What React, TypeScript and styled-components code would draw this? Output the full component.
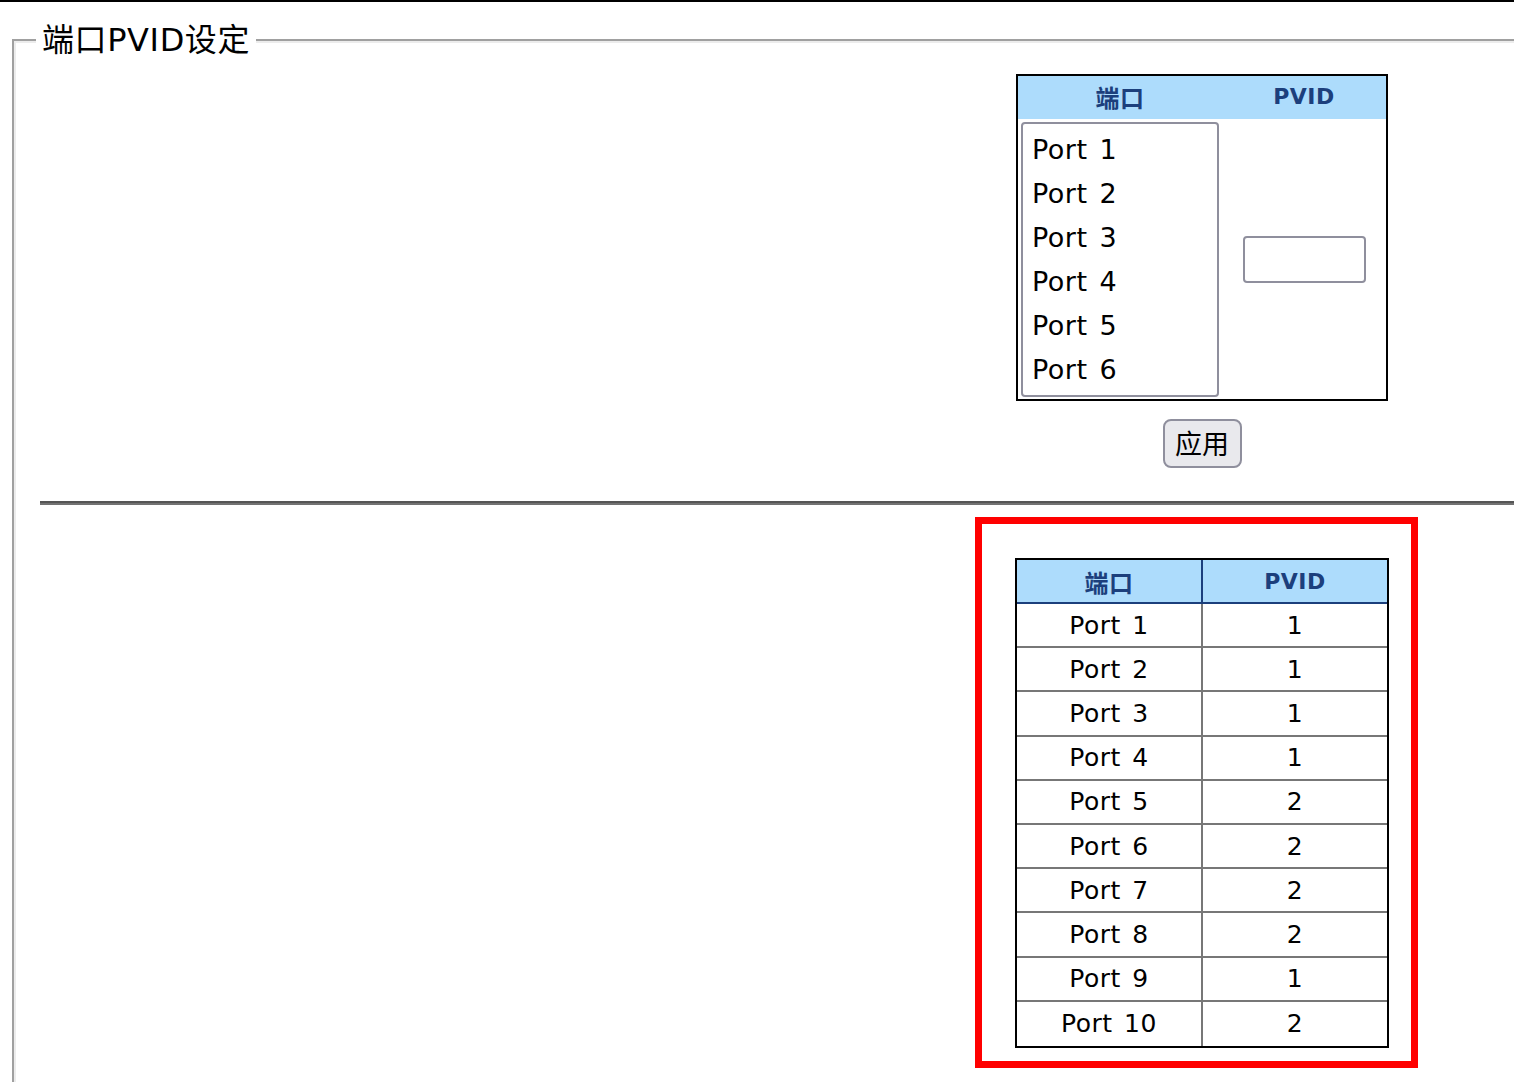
import React from "react";
import styled, { createGlobalStyle } from "styled-components";

const GlobalStyle = createGlobalStyle`
  * { box-sizing: border-box; }
  html, body {
    margin: 0;
    padding: 0;
    background: #ffffff;
    overflow: hidden;
  }
  body {
    font-family: "DejaVu Sans", "Noto Sans CJK SC", sans-serif;
    color: #000000;
  }
`;

const FONT = `"DejaVu Sans", "Noto Sans CJK SC", sans-serif`;

const TopRule = styled.div`
  height: 2px;
  background: #000000;
`;

const Frame = styled.fieldset`
  margin: 20px 0 0 12px;
  width: 1600px;
  min-height: 1200px;
  padding: 16px 0 60px 22px;
  border: 2px solid #a0a0a0;
  box-shadow: inset 2px 2px 0 #ececec;
`;

const Legend = styled.legend`
  padding: 0 6px;
  font-size: 32px;
  line-height: 36px;
  letter-spacing: 0.6px;
  background: #ffffff;
  color: #000000;
`;

const Panel = styled.div`
  margin-left: 980px;
  width: 372px;
  display: flex;
  flex-direction: column;
  align-items: center;
`;

const Editor = styled.div`
  width: 372px;
  border: 2px solid #000000;
  display: grid;
  grid-template-columns: 204px 1fr;
`;

const HeadCell = styled.div<{ $cjk?: boolean }>`
  height: 43px;
  padding-bottom: 2px;
  background: #addcfc;
  color: #1c3f7c;
  font-weight: bold;
  font-size: ${(p) => (p.$cjk ? "24px" : "22px")};
  letter-spacing: 0.5px;
  display: flex;
  align-items: center;
  justify-content: center;
`;

const ListCell = styled.div`
  padding: 3px 3px 2px 3px;
`;

const PortList = styled.div`
  height: 275px;
  border: 2px solid #8f8f9d;
  border-radius: 4px;
  padding-top: 4px;
  overflow: hidden;
`;

const PortOption = styled.div`
  font-size: 27px;
  line-height: 44px;
  padding-left: 9px;
  letter-spacing: 0.5px;
  word-spacing: 3px;
  white-space: pre;
`;

const InputCell = styled.div`
  display: flex;
  align-items: center;
  justify-content: center;
`;

const PvidInput = styled.input`
  width: 123px;
  height: 47px;
  border: 2px solid #8f8f9d;
  border-radius: 4px;
  background: #ffffff;
  font: 26px ${FONT};
  padding: 0 6px;
  outline: none;
`;

const ApplyButton = styled.button`
  margin-top: 18px;
  width: 79px;
  height: 49px;
  padding: 0 0 2px 0;
  font: 27px ${FONT};
  color: #000000;
  background: #e9e9ed;
  border: 2px solid #8f8f9d;
  border-radius: 8px;
`;

const Divider = styled.hr`
  margin: 33px 0 0 4px;
  height: 0;
  border: none;
  border-top: 2px solid #555555;
  border-bottom: 2px solid #727272;
`;

const Highlight = styled.div`
  margin: 12px 0 0 939px;
  width: 443px;
  border: 7px solid #ff0000;
  padding: 34px 22px 13px 33px;
`;

const PvidTable = styled.table`
  width: 374px;
  border: 2px solid #000000;
  border-spacing: 0;
  table-layout: fixed;
`;

const Th = styled.th<{ $divider?: boolean; $cjk?: boolean }>`
  height: 44px;
  padding: 0;
  background: #addcfc;
  color: #1c3f7c;
  font-size: ${(p) => (p.$cjk ? "24px" : "22px")};
  font-weight: bold;
  letter-spacing: 0.5px;
  text-align: center;
  border-bottom: 2px solid #1c3f7c;
  border-right: ${(p) => (p.$divider ? "2px solid #1c3f7c" : "none")};
  width: ${(p) => (p.$divider ? "186px" : "auto")};
`;

const Td = styled.td<{ $divider?: boolean; $last?: boolean }>`
  height: 44.2px;
  padding: 0;
  text-align: center;
  font-size: 25px;
  letter-spacing: 0.5px;
  word-spacing: 3px;
  white-space: pre;
  border-bottom: ${(p) => (p.$last ? "none" : "2px solid #777777")};
  border-right: ${(p) => (p.$divider ? "2px solid #777777" : "none")};
`;

const ports = ["Port 1", "Port 2", "Port 3", "Port 4", "Port 5", "Port 6"];

const pvids: [string, string][] = [
  ["Port 1", "1"],
  ["Port 2", "1"],
  ["Port 3", "1"],
  ["Port 4", "1"],
  ["Port 5", "2"],
  ["Port 6", "2"],
  ["Port 7", "2"],
  ["Port 8", "2"],
  ["Port 9", "1"],
  ["Port 10", "2"],
];

export default function App() {
  return (
    <>
      <GlobalStyle />
      <TopRule />
      <Frame>
        <Legend>端口PVID设定</Legend>
        <Panel>
          <Editor>
            <HeadCell $cjk>端口</HeadCell>
            <HeadCell>PVID</HeadCell>
            <ListCell>
              <PortList role="listbox">
                {ports.map((p) => (
                  <PortOption key={p} role="option">
                    {p}
                  </PortOption>
                ))}
              </PortList>
            </ListCell>
            <InputCell>
              <PvidInput type="text" />
            </InputCell>
          </Editor>
          <ApplyButton>应用</ApplyButton>
        </Panel>
        <Divider />
        <Highlight>
          <PvidTable>
            <thead>
              <tr>
                <Th $divider $cjk>
                  端口
                </Th>
                <Th>PVID</Th>
              </tr>
            </thead>
            <tbody>
              {pvids.map(([port, v], i) => (
                <tr key={port}>
                  <Td $divider $last={i === pvids.length - 1}>
                    {port}
                  </Td>
                  <Td $last={i === pvids.length - 1}>{v}</Td>
                </tr>
              ))}
            </tbody>
          </PvidTable>
        </Highlight>
      </Frame>
    </>
  );
}
